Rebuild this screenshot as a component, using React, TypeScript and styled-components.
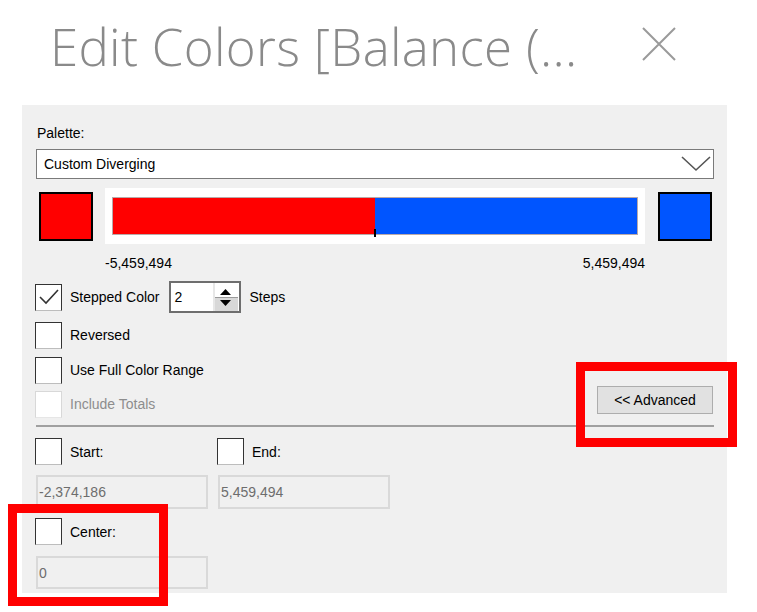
import React from "react";
import styled, { createGlobalStyle } from "styled-components";

const Global = createGlobalStyle`
  html, body { margin: 0; padding: 0; background: #ffffff; }
  body { font-family: "Liberation Sans", Arial, sans-serif; }
  * { box-sizing: border-box; }
`;

const Page = styled.div`
  position: relative;
  width: 757px;
  height: 612px;
  background: #ffffff;
  overflow: hidden;
`;

const Header = styled.div`
  display: flex;
  align-items: flex-start;
  justify-content: space-between;
  height: 105px;
  padding: 14px 81px 0 50px;
`;

const Title = styled.div`
  font-family: "Open Sans", "Noto Sans", sans-serif;
  font-weight: 300;
  font-size: 51px;
  line-height: 64px;
  letter-spacing: 0.3px;
  color: #8a8a8a;
  white-space: nowrap;
`;

const CloseIcon = styled.svg`
  margin-top: 13px;
  flex: none;
`;

const Panel = styled.div`
  margin-left: 22px;
  width: 705px;
  height: 488px;
  background: #f0f0f0;
  padding: 20px 13px 0 14px;
  display: flex;
  flex-direction: column;
  font-size: 14px;
  color: #000;
`;

const Label = styled.div<{ $mt?: number }>`
  margin-top: ${(p) => p.$mt ?? 0}px;
  padding-left: 1px;
  line-height: 16px;
  height: 16px;
`;

const Select = styled.div`
  margin-top: 8px;
  height: 30px;
  width: 678px;
  background: #fff;
  border: 1px solid #7a7a7a;
  display: flex;
  align-items: center;
  justify-content: space-between;
  padding: 0 2px 0 7px;
`;

const ColorRow = styled.div`
  margin-top: 9px;
  display: flex;
  align-items: center;
  height: 56px;
  padding-left: 3px;
`;

const Swatch = styled.div<{ $color: string; $ml?: number }>`
  width: 54px;
  height: 49px;
  margin-left: ${(p) => p.$ml ?? 0}px;
  background: ${(p) => p.$color};
  border: 2px solid #000;
  flex: none;
`;

const BarFrame = styled.div`
  margin-left: 12px;
  width: 540px;
  height: 56px;
  background: #fff;
  padding: 9px 7px;
  flex: none;
`;

const Bar = styled.div`
  position: relative;
  display: flex;
  height: 100%;
  border: 1px solid #b9a9a9;
`;

const Segment = styled.div<{ $color: string }>`
  flex: 1;
  background: ${(p) => p.$color};
`;

const Tick = styled.div`
  position: absolute;
  left: 50%;
  bottom: -3px;
  width: 2px;
  height: 8px;
  margin-left: -1px;
  background: #000;
`;

const ValueRow = styled.div`
  margin-top: 11px;
  margin-left: 69px;
  width: 540px;
  display: flex;
  justify-content: space-between;
  line-height: 16px;
`;

const CheckRow = styled.div<{ $mt: number; $h?: number }>`
  margin-top: ${(p) => p.$mt}px;
  height: ${(p) => p.$h ?? 28}px;
  display: flex;
  align-items: center;
  justify-content: space-between;
`;

const CheckGroup = styled.div`
  display: flex;
  align-items: center;
`;

const Box = styled.div<{ $disabled?: boolean }>`
  width: 27px;
  height: 27px;
  margin-left: -1px;
  background: #fff;
  border: 1.5px solid ${(p) => (p.$disabled ? "#d8d8d8" : "#333")};
  border-bottom-color: ${(p) => (p.$disabled ? "#e6e6e6" : "#bdbdbd")};
  display: flex;
  align-items: center;
  justify-content: center;
  flex: none;
`;

const CheckText = styled.span<{ $disabled?: boolean; $ml?: number }>`
  margin-left: ${(p) => p.$ml ?? 8}px;
  color: ${(p) => (p.$disabled ? "#8d8d8d" : "#000")};
  white-space: nowrap;
`;

const Spin = styled.div`
  margin-left: 9px;
  width: 72px;
  height: 32px;
  background: #fff;
  border: 2px solid #6e6e6e;
  display: flex;
  align-items: center;
  justify-content: space-between;
  padding: 0 1px 0 4px;
`;

const AdvancedButton = styled.div`
  align-self: flex-start;
  margin-top: -4px;
  margin-right: 1px;
  width: 116px;
  height: 28px;
  background: #e1e1e1;
  border: 1px solid #adadad;
  display: flex;
  align-items: center;
  justify-content: center;
  font-size: 14px;
  color: #000;
`;

const Separator = styled.div`
  margin-top: 7px;
  height: 2px;
  width: 678px;
  background: #a0a0a0;
`;

const Grid = styled.div<{ $mt: number; $h: number }>`
  margin-top: ${(p) => p.$mt}px;
  height: ${(p) => p.$h}px;
  display: grid;
  grid-template-columns: 172px 172px;
  column-gap: 10px;
  align-items: center;
`;

const Field = styled.div`
  height: 100%;
  border: 2px solid #d9d9d9;
  background: #f0f0f0;
  color: #6d6d6d;
  display: flex;
  align-items: center;
  padding-left: 1px;
`;

const Highlight = styled.div<{ $l: number; $t: number; $w: number; $h: number }>`
  position: absolute;
  left: ${(p) => p.$l}px;
  top: ${(p) => p.$t}px;
  width: ${(p) => p.$w}px;
  height: ${(p) => p.$h}px;
  border: 9px solid #ff0000;
  pointer-events: none;
`;

const Check = () => (
  <svg width="22" height="18" viewBox="0 0 22 18">
    <path d="M2 9 L8 15 L20 2" fill="none" stroke="#333" strokeWidth="1.6" />
  </svg>
);

const SpinArrows = () => (
  <svg width="25" height="28" viewBox="0 0 25 28">
    <rect x="0" y="0" width="25" height="28" fill="#fff" />
    <line x1="1" y1="0" x2="1" y2="28" stroke="#cfcfcf" strokeWidth="1" />
    <rect x="2" y="15" width="23" height="13" fill="#d8d8d8" />
    <line x1="2" y1="14.5" x2="25" y2="14.5" stroke="#9a9a9a" strokeWidth="1" />
    <path d="M7 12 L12.5 6 L18 12 Z" fill="#000" />
    <path d="M7 17 L18 17 L12.5 23 Z" fill="#000" />
  </svg>
);

export default function App() {
  return (
    <Page>
      <Global />
      <Header>
        <Title>Edit Colors [Balance (...</Title>
        <CloseIcon width="34" height="34" viewBox="0 0 34 34">
          <path d="M1 1 L33 33 M33 1 L1 33" stroke="#9a9a9a" strokeWidth="2" fill="none" />
        </CloseIcon>
      </Header>
      <Panel>
        <Label>Palette:</Label>
        <Select>
          <span>Custom Diverging</span>
          <svg width="30" height="18" viewBox="0 0 30 18">
            <path d="M1 2 L15 15 L29 2" fill="none" stroke="#555" strokeWidth="1.6" />
          </svg>
        </Select>
        <ColorRow>
          <Swatch $color="#ff0000" />
          <BarFrame>
            <Bar>
              <Segment $color="#ff0000" />
              <Segment $color="#0055ff" />
              <Tick />
            </Bar>
          </BarFrame>
          <Swatch $color="#0055ff" $ml={13} />
        </ColorRow>
        <ValueRow>
          <span>-5,459,494</span>
          <span>5,459,494</span>
        </ValueRow>
        <CheckRow $mt={10} $h={32}>
          <CheckGroup>
            <Box>
              <Check />
            </Box>
            <CheckText>Stepped Color</CheckText>
            <Spin>
              <span>2</span>
              <SpinArrows />
            </Spin>
            <CheckText $ml={9}>Steps</CheckText>
          </CheckGroup>
        </CheckRow>
        <CheckRow $mt={8}>
          <CheckGroup>
            <Box />
            <CheckText>Reversed</CheckText>
          </CheckGroup>
        </CheckRow>
        <CheckRow $mt={7}>
          <CheckGroup>
            <Box />
            <CheckText>Use Full Color Range</CheckText>
          </CheckGroup>
        </CheckRow>
        <CheckRow $mt={6}>
          <CheckGroup>
            <Box $disabled />
            <CheckText $disabled>Include Totals</CheckText>
          </CheckGroup>
          <AdvancedButton>&lt;&lt; Advanced</AdvancedButton>
        </CheckRow>
        <Separator />
        <Grid $mt={11} $h={27}>
          <CheckGroup>
            <Box />
            <CheckText>Start:</CheckText>
          </CheckGroup>
          <CheckGroup>
            <Box />
            <CheckText>End:</CheckText>
          </CheckGroup>
        </Grid>
        <Grid $mt={10} $h={34}>
          <Field>-2,374,186</Field>
          <Field>5,459,494</Field>
        </Grid>
        <Grid $mt={9} $h={27}>
          <CheckGroup>
            <Box />
            <CheckText>Center:</CheckText>
          </CheckGroup>
        </Grid>
        <Grid $mt={11} $h={33}>
          <Field>0</Field>
        </Grid>
      </Panel>
      <Highlight $l={576} $t={362} $w={161} $h={85} />
      <Highlight $l={8} $t={504} $w={160} $h={102} />
    </Page>
  );
}
